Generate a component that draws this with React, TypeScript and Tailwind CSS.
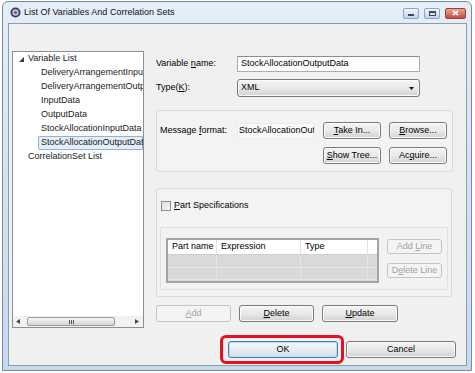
import React from "react"

function Btn({
  children,
  className = "",
  disabled = false,
  focus = false,
}: {
  children: React.ReactNode
  className?: string
  disabled?: boolean
  focus?: boolean
}) {
  const tone = disabled
    ? "border-[#c2c5c8] bg-[#f4f4f4] text-[#a3a3a3]"
    : focus
    ? "border-[#3c7fb1] bg-gradient-to-b from-[#f4f8fb] via-[#e7edf2] to-[#d4dde5] text-black shadow-[inset_0_0_0_1px_#b7dcf3]"
    : "border-[#7a7a7a] bg-gradient-to-b from-[#f4f4f4] via-[#e9e9e9] to-[#d2d2d2] text-black shadow-[inset_0_0_0_1px_#fbfbfb]"
  return (
    <div
      className={`flex items-center justify-center rounded-[3px] border leading-none whitespace-nowrap ${tone} ${className}`}
    >
      <span>{children}</span>
    </div>
  )
}

function U({ children }: { children: React.ReactNode }) {
  return <span className="underline underline-offset-[1px]">{children}</span>
}

const treeChildren = [
  "DeliveryArrangementInputData",
  "DeliveryArrangementOutputData",
  "InputData",
  "OutputData",
  "StockAllocationInputData",
]

export default function App() {
  return (
    <div className="w-[475px] h-[373px] bg-white overflow-hidden font-['Liberation_Sans',Arial,sans-serif] text-[9px] text-black">
      <div className="ml-[2px] mt-[1px] w-[470px] h-[370px] flex flex-col border border-[#7b8a9c] rounded-t-[6px] bg-gradient-to-b from-[#e4eef8] via-[#d3e2f1] to-[#c6daee]">
        {/* Title bar */}
        <div className="h-[21px] flex items-center pl-[7px] pr-[5px] shrink-0">
          <svg width="11" height="11" viewBox="0 0 11 11" className="shrink-0">
            <circle cx="5.5" cy="5.5" r="5" fill="#3d3550" />
            <circle cx="5.5" cy="5.5" r="3.2" fill="#c9c3dc" />
            <circle cx="5.5" cy="5.5" r="1.6" fill="#6a5a8e" />
          </svg>
          <span className="ml-[3px] text-[9px] text-[#111]">List Of Variables And Correlation Sets</span>
          <div className="ml-auto flex items-center gap-[5px] mt-[1px]">
            <div className="w-[16px] h-[11px] rounded-[2px] border border-[#8ea5bf] bg-gradient-to-b from-[#eef4fa] to-[#c4d6ea] flex items-center justify-center">
              <div className="w-[6px] h-[2px] bg-[#3b4b5e] mt-[3px]" />
            </div>
            <div className="w-[16px] h-[11px] rounded-[2px] border border-[#8ea5bf] bg-gradient-to-b from-[#eef4fa] to-[#c4d6ea] flex items-center justify-center">
              <div className="w-[7px] h-[5px] border border-[#3b4b5e] border-t-2" />
            </div>
            <div className="w-[21px] h-[11px] rounded-[2px] border border-[#9b3f3f] bg-gradient-to-b from-[#e8a393] to-[#c64a38] flex items-center justify-center">
              <svg width="7" height="6" viewBox="0 0 7 6">
                <path d="M1 0.8 L6 5.2 M6 0.8 L1 5.2" stroke="#fff" strokeWidth="1.6" />
              </svg>
            </div>
          </div>
        </div>

        {/* Client area */}
        <div className="flex-1 ml-[5px] mr-[4px] mb-[4px] border border-[#8c9cb0] bg-[#f0f0f0] flex flex-col">
          <div className="flex pt-[27px]">
            {/* Tree */}
            <div className="ml-[3px] w-[132px] h-[277px] border border-[#8a8f97] bg-white flex flex-col overflow-hidden">
              <div className="flex-1 whitespace-nowrap text-[#1a1a1a]">
                <div className="h-[14px] flex items-center">
                  <svg width="5" height="5" viewBox="0 0 5 5" className="ml-[6px]">
                    <path d="M5 0 L5 5 L0 5 Z" fill="#3a3a3a" />
                  </svg>
                  <span className="ml-[4px]">Variable List</span>
                </div>
                {treeChildren.map((t) => (
                  <div key={t} className="h-[14px] flex items-center pl-[28px]">
                    {t}
                  </div>
                ))}
                <div className="h-[14px] ml-[25px] flex items-center pl-[2px] border border-[#8fb2d6] bg-[#e3eef9] rounded-l-[2px]">
                  StockAllocationOutputData
                </div>
                <div className="h-[14px] flex items-center pl-[15px]">CorrelationSet List</div>
              </div>
              {/* horizontal scrollbar */}
              <div className="h-[11px] bg-[#f2f2f2] flex items-center px-[3px]">
                <svg width="4" height="5" viewBox="0 0 4 5">
                  <path d="M4 0 L0 2.5 L4 5 Z" fill="#4a4a4a" />
                </svg>
                <div className="ml-[7px] w-[88px] h-[9px] rounded-[2px] border border-[#9a9a9a] bg-gradient-to-b from-[#f6f6f6] to-[#d4d4d4] flex items-center justify-center gap-[1px]">
                  <div className="w-px h-[4px] bg-[#555]" />
                  <div className="w-px h-[4px] bg-[#555]" />
                  <div className="w-px h-[4px] bg-[#555]" />
                </div>
                <svg width="4" height="5" viewBox="0 0 4 5" className="ml-auto mr-[1px]">
                  <path d="M0 0 L4 2.5 L0 5 Z" fill="#4a4a4a" />
                </svg>
              </div>
            </div>

            {/* Right panel */}
            <div className="ml-[12px] w-[297px] flex flex-col">
              <div className="mt-[5px] flex items-center">
                <div className="w-[81px]">
                  Variable <U>n</U>ame:
                </div>
                <div className="w-[183px] h-[16px] border border-[#abadb3] border-t-[#8a8d94] bg-white flex items-center pl-[3px]">
                  StockAllocationOutputData
                </div>
              </div>
              <div className="mt-[7px] flex items-center">
                <div className="w-[81px]">
                  Type(<U>K</U>):
                </div>
                <div className="w-[183px] h-[18px] rounded-[3px] border border-[#7a7a7a] bg-gradient-to-b from-[#f4f4f4] via-[#e9e9e9] to-[#d2d2d2] shadow-[inset_0_0_0_1px_#fbfbfb] flex items-center pl-[3px] pr-[5px]">
                  <span>XML</span>
                  <svg width="5" height="3" viewBox="0 0 5 3" className="ml-auto">
                    <path d="M0 0 L5 0 L2.5 3 Z" fill="#111" />
                  </svg>
                </div>
              </div>

              {/* Message format group */}
              <div className="mt-[13px] h-[62px] rounded-[3px] border border-[#dadada] bg-[#f3f3f3] pl-[3px] pt-[11px]">
                <div className="flex items-center">
                  <div className="w-[77px]">
                    Message <U>f</U>ormat:
                  </div>
                  <div className="w-[78px] h-[16px] border border-[#ececec] bg-[#fafafa] flex items-center pl-px whitespace-nowrap overflow-hidden">
                    StockAllocationOutputData
                  </div>
                  <Btn className="ml-[8px] w-[58px] h-[17px]">
                    <U>T</U>ake In...
                  </Btn>
                  <Btn className="ml-[8px] w-[58px] h-[17px]">
                    <U>B</U>rowse...
                  </Btn>
                </div>
                <div className="mt-[8px] flex pl-[163px]">
                  <Btn className="w-[58px] h-[17px]">
                    <U>S</U>how Tree...
                  </Btn>
                  <Btn className="ml-[8px] w-[58px] h-[17px]">
                    Ac<U>q</U>uire...
                  </Btn>
                </div>
              </div>

              {/* Part specifications group */}
              <div className="mt-[16px] w-[296px] h-[109px] rounded-[3px] border border-[#dadada] bg-[#f3f3f3] pt-[10px]">
                <div className="flex items-center pl-[4px]">
                  <div className="w-[10px] h-[10px] border border-[#8f8f8f] bg-gradient-to-br from-[#dcdcdc] to-[#f6f6f6]" />
                  <span className="ml-[3px]">
                    <U>P</U>art Specifications
                  </span>
                </div>
                <div className="mt-[14px] ml-[3px] w-[288px] h-[63px] rounded-[2px] border border-[#e0e0e0] bg-[#f2f2f2] pl-[5px] pt-[10px] flex">
                  <div className="w-[213px] h-[45px] border-2 border-[#a3a3a3] bg-[#d9d9d9] flex flex-col">
                    <div className="h-[16px] bg-white flex border-b border-[#d0d0d0]">
                      <div className="w-[49px] pl-[4px] flex items-center border-r border-[#e3e3e3]">Part name</div>
                      <div className="w-[84px] pl-[4px] flex items-center border-r border-[#e3e3e3]">Expression</div>
                      <div className="w-[67px] pl-[4px] flex items-center border-r border-[#e3e3e3]">Type</div>
                      <div className="flex-1" />
                    </div>
                    {[0, 1].map((r) => (
                      <div key={r} className="h-[13px] flex border-b border-[#e6e6e6]">
                        <div className="w-[49px] border-r border-[#e6e6e6]" />
                        <div className="w-[84px] border-r border-[#e6e6e6]" />
                        <div className="w-[67px] border-r border-[#e6e6e6]" />
                        <div className="flex-1" />
                      </div>
                    ))}
                  </div>
                  <div className="ml-[8px] pt-[1px] flex flex-col gap-[9px]">
                    <Btn disabled className="w-[55px] h-[15px]">
                      Add <U>L</U>ine
                    </Btn>
                    <Btn disabled className="w-[55px] h-[15px]">
                      D<U>e</U>lete Line
                    </Btn>
                  </div>
                </div>
              </div>

              {/* Add / Delete / Update */}
              <div className="mt-[8px] flex gap-[8px]">
                <Btn disabled className="w-[75px] h-[17px]">
                  <U>A</U>dd
                </Btn>
                <Btn className="w-[75px] h-[17px]">
                  <U>D</U>elete
                </Btn>
                <Btn className="w-[76px] h-[17px]">
                  <U>U</U>pdate
                </Btn>
              </div>
            </div>
          </div>

          {/* OK / Cancel */}
          <div className="mt-[13px] flex justify-end gap-[8px] pr-[10px]">
            <div className="relative">
              <Btn focus className="w-[110px] h-[17px]">
                OK
              </Btn>
              <div className="absolute -left-[8px] -right-[6px] -top-[6px] -bottom-[6px] rounded-[6px] border-[3px] border-[#e8101c]" />
            </div>
            <Btn className="w-[110px] h-[17px]">Cancel</Btn>
          </div>
        </div>
      </div>
    </div>
  )
}
